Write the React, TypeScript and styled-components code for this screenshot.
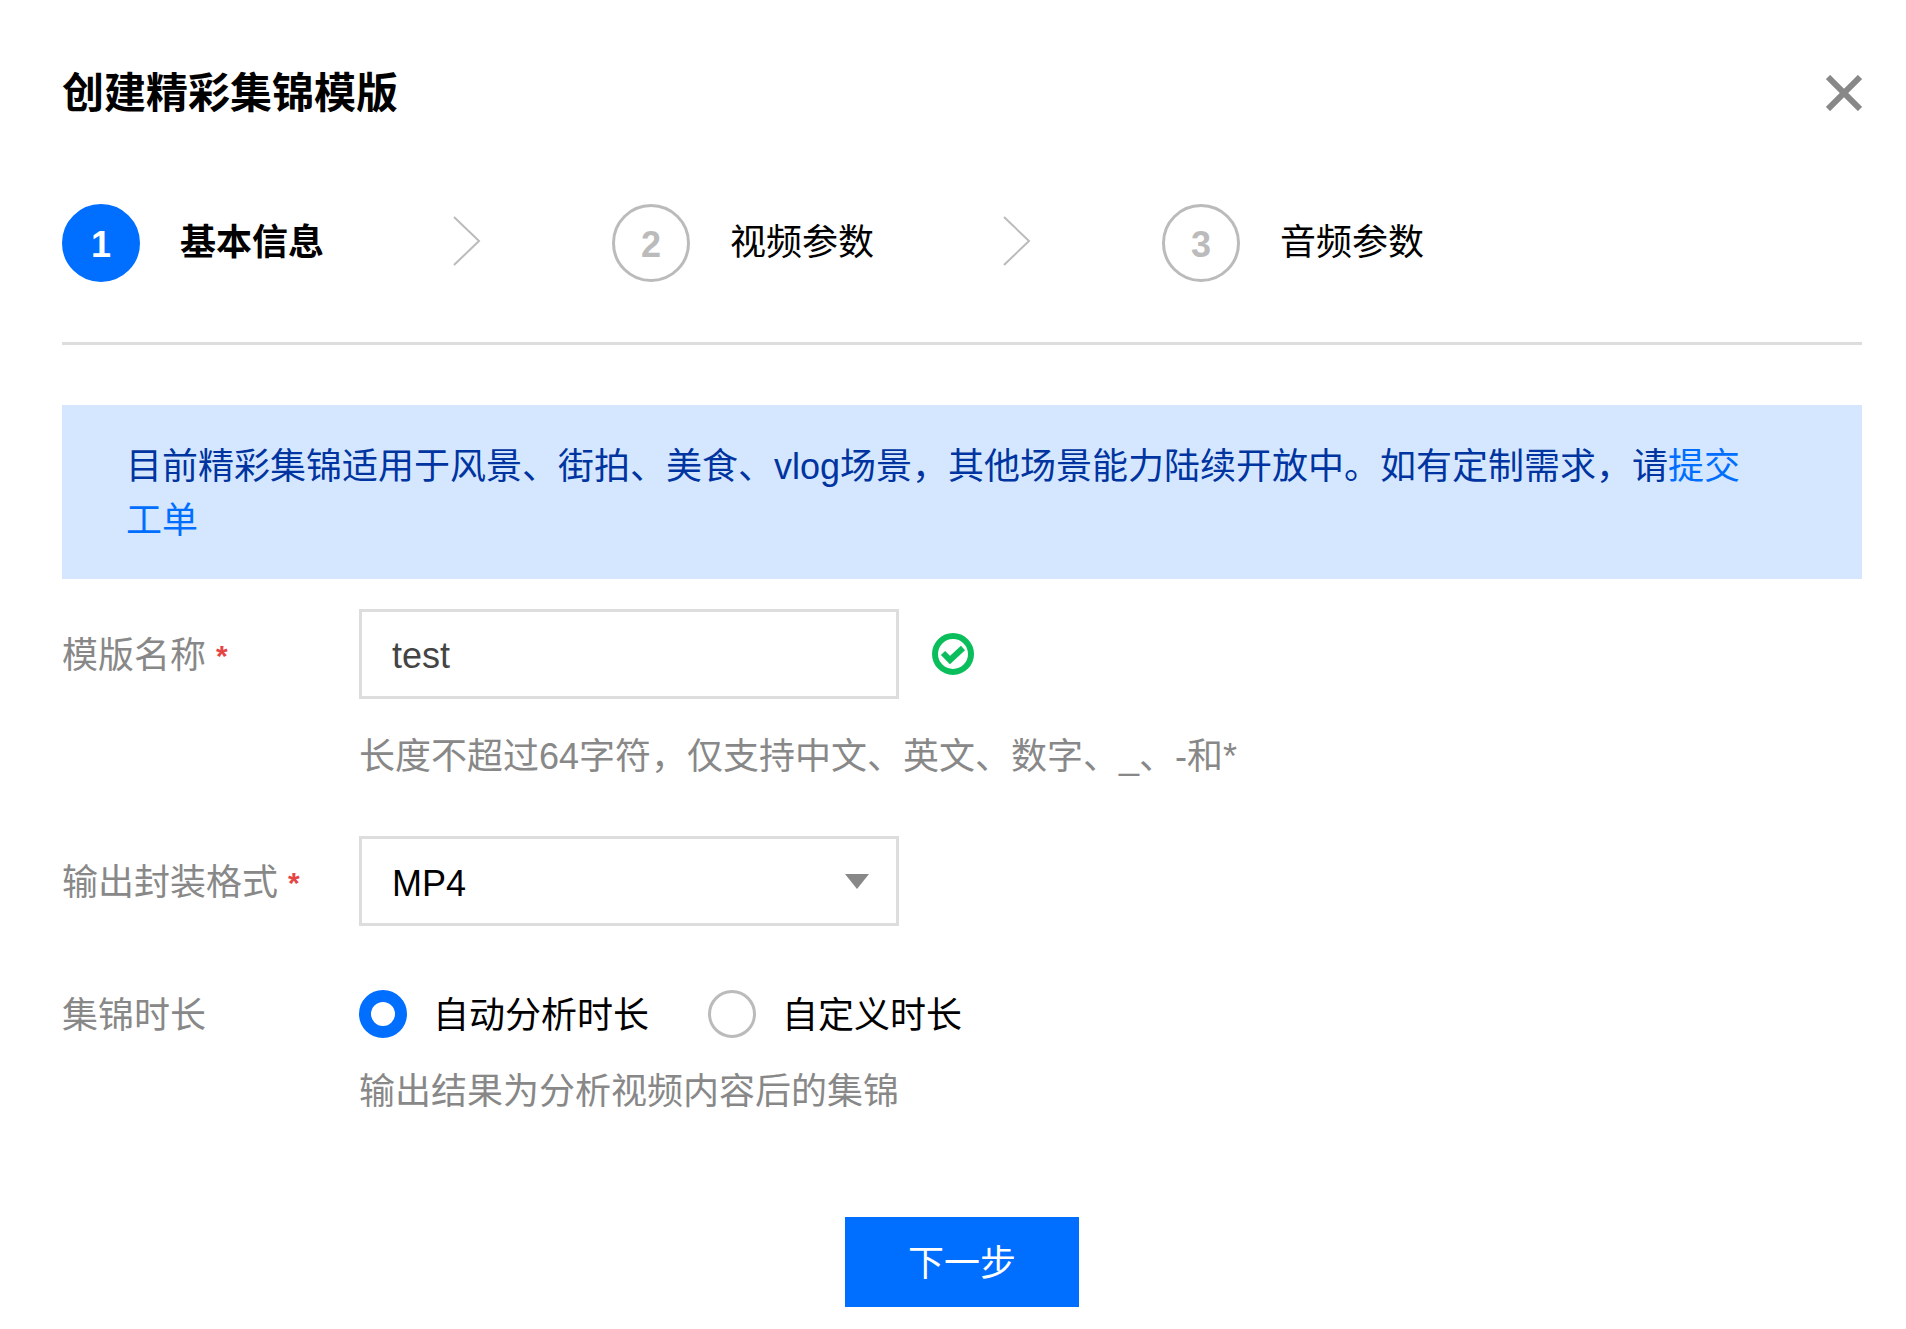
import React, { useState } from "react";
import styled, { createGlobalStyle } from "styled-components";

const GlobalStyle = createGlobalStyle`
  *, *::before, *::after { box-sizing: border-box; }
  body {
    margin: 0;
    background: #fff;
    color: #000;
    font-family: "Liberation Sans", "Noto Sans CJK SC", sans-serif;
    font-size: 36px;
    line-height: 54px;
  }
  button, input, select { font: inherit; color: inherit; }
`;

const Dialog = styled.main`
  padding: 62px 44px 21px 62px;
`;

const Header = styled.header`
  display: flex;
  align-items: center;
  justify-content: space-between;
`;

const Title = styled.h1`
  margin: 0;
  padding-top: 2px;
  font-size: 42px;
  line-height: 60px;
  font-weight: 700;
`;

const CloseButton = styled.button`
  display: flex;
  padding: 0;
  border: 0;
  background: none;
  color: #888;
  cursor: pointer;
`;

const Steps = styled.ol`
  display: flex;
  margin: 80px 0 60px;
  padding: 0 0 60px;
  list-style: none;
  border-bottom: 3px solid #ddd;
`;

const Step = styled.li<{ $active?: boolean }>`
  display: flex;
  align-items: center;
  flex: 0 1 550px;
  font-weight: ${(p) => (p.$active ? 700 : 400)};
`;

const StepNumber = styled.span<{ $active?: boolean }>`
  display: flex;
  align-items: center;
  justify-content: center;
  width: 78px;
  height: 78px;
  margin-right: 40px;
  padding-top: 3px;
  border: 3px solid ${(p) => (p.$active ? "#006eff" : "#bbb")};
  border-radius: 50%;
  background: ${(p) => (p.$active ? "#006eff" : "#fff")};
  color: ${(p) => (p.$active ? "#fff" : "#bbb")};
  font-weight: 700;
`;

const StepArrow = styled.svg`
  margin: 0 131px 4px auto;
`;

const Notice = styled.p`
  margin: 0;
  padding: 35px 90px 31px 64px;
  background: #d5e7ff;
  color: #0034a0;
`;

const NoticeLink = styled.a`
  color: #006eff;
  text-decoration: none;
`;

const Form = styled.form`
  display: flex;
  flex-direction: column;
  padding-top: 30px;
`;

const Row = styled.div<{ $gap: number }>`
  display: grid;
  grid-template-columns: 297px 1fr;
  margin-bottom: ${(p) => p.$gap}px;
`;

const LabelCell = styled.div<{ $height: number }>`
  display: flex;
  align-items: center;
  gap: 10px;
  height: ${(p) => p.$height}px;
  padding-top: 3px;
  color: #888;
`;

const Required = styled.span`
  color: #e54545;
  font-size: 30px;
  font-weight: 700;
`;

const Line = styled.div`
  display: flex;
  align-items: center;
`;

const TextInput = styled.input`
  width: 540px;
  height: 90px;
  padding: 3px 30px 0;
  border: 3px solid #ddd;
  border-radius: 0;
  background: #fff;
  color: #444;
  outline: none;
`;

const ValidIcon = styled.svg`
  margin-left: 33px;
`;

const SelectBox = styled.div`
  display: grid;
  align-items: center;
  width: 540px;
  > * { grid-area: 1 / 1; }
`;

const Select = styled.select`
  width: 100%;
  height: 90px;
  padding: 5px 30px 0;
  border: 3px solid #ddd;
  border-radius: 0;
  background: #fff;
  color: #000;
  appearance: none;
  outline: none;
`;

const Caret = styled.svg`
  justify-self: end;
  margin-right: 30px;
  pointer-events: none;
`;

const Hint = styled.p<{ $gap: number }>`
  margin: ${(p) => p.$gap}px 0 0;
  color: #888;
`;

const RadioLabel = styled.label`
  display: flex;
  align-items: center;
  gap: 26px;
  margin-right: 59px;
`;

const RadioText = styled.span`
  padding-top: 4px;
  line-height: 50px;
`;

const Radio = styled.input`
  appearance: none;
  width: 48px;
  height: 48px;
  margin: 0;
  border: 3px solid #bbb;
  border-radius: 50%;
  background: #fff;
  &:checked { border: 12px solid #006eff; }
`;

const NextButton = styled.button`
  align-self: center;
  width: 234px;
  height: 90px;
  padding: 3px 0 0;
  border: 0;
  background: #006eff;
  color: #fff;
  cursor: pointer;
`;

const steps = ["基本信息", "视频参数", "音频参数"];

const durations = [
  { value: "auto", text: "自动分析时长" },
  { value: "custom", text: "自定义时长" },
];

export default function App() {
  const [name, setName] = useState("test");
  const [duration, setDuration] = useState("auto");

  return (
    <>
      <GlobalStyle />
      <Dialog>
        <Header>
          <Title>创建精彩集锦模版</Title>
          <CloseButton type="button" aria-label="关闭">
            <svg width="36" height="36" viewBox="0 0 36 36" fill="none" stroke="currentColor" strokeWidth="6">
              <path d="M2 2 34 34M34 2 2 34" />
            </svg>
          </CloseButton>
        </Header>

        <Steps>
          {steps.map((text, i) => (
            <Step key={text} $active={i === 0}>
              <StepNumber $active={i === 0}>{i + 1}</StepNumber>
              <span>{text}</span>
              {i < steps.length - 1 && (
                <StepArrow width="28" height="50" viewBox="0 0 28 50" fill="none" stroke="#bbb" strokeWidth="2">
                  <path d="M1 1 26 25 1 49" />
                </StepArrow>
              )}
            </Step>
          ))}
        </Steps>

        <Notice>
          目前精彩集锦适用于风景、街拍、美食、vlog场景，其他场景能力陆续开放中。如有定制需求，请
          <NoticeLink href="#ticket">提交工单</NoticeLink>
        </Notice>

        <Form onSubmit={(e) => e.preventDefault()}>
          <Row $gap={52}>
            <LabelCell $height={90}>
              <label htmlFor="name">模版名称</label>
              <Required>*</Required>
            </LabelCell>
            <div>
              <Line>
                <TextInput id="name" value={name} onChange={(e) => setName(e.target.value)} />
                <ValidIcon width="42" height="42" viewBox="0 0 42 42" fill="none" stroke="#0abf5b">
                  <circle cx="21" cy="21" r="18" strokeWidth="6" />
                  <path d="M11 20 18 27 31 15" strokeWidth="6" />
                </ValidIcon>
              </Line>
              <Hint $gap={31}>长度不超过64字符，仅支持中文、英文、数字、_、-和*</Hint>
            </div>
          </Row>

          <Row $gap={61}>
            <LabelCell $height={90}>
              <label htmlFor="format">输出封装格式</label>
              <Required>*</Required>
            </LabelCell>
            <SelectBox>
              <Select id="format" defaultValue="MP4">
                <option>MP4</option>
              </Select>
              <Caret width="24" height="15" viewBox="0 0 24 15" fill="#888">
                <path d="M0 0H24L12 15Z" />
              </Caret>
            </SelectBox>
          </Row>

          <Row $gap={98} role="radiogroup" aria-labelledby="duration-label">
            <LabelCell $height={54}>
              <span id="duration-label">集锦时长</span>
            </LabelCell>
            <div>
              <Line>
                {durations.map((d) => (
                  <RadioLabel key={d.value}>
                    <Radio
                      type="radio"
                      name="duration"
                      checked={duration === d.value}
                      onChange={() => setDuration(d.value)}
                    />
                    <RadioText>{d.text}</RadioText>
                  </RadioLabel>
                ))}
              </Line>
              <Hint $gap={24}>输出结果为分析视频内容后的集锦</Hint>
            </div>
          </Row>

          <NextButton type="submit">下一步</NextButton>
        </Form>
      </Dialog>
    </>
  );
}
